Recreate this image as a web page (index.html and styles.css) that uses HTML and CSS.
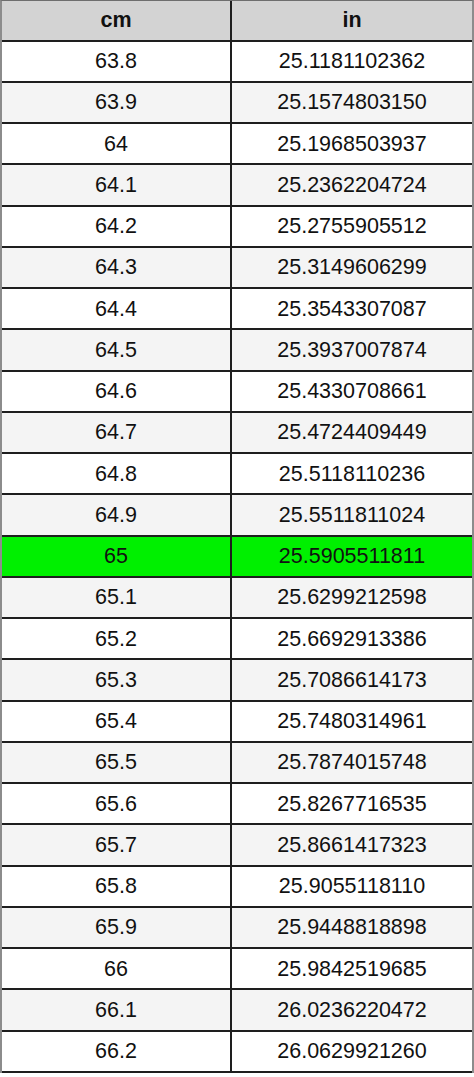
FILE: index.html
```html
<!DOCTYPE html>
<html lang="en">
<head>
<meta charset="utf-8">
<title>cm to in</title>
<link rel="stylesheet" href="styles.css">
</head>
<body>
<table class="conv">
  <thead>
    <tr class="head"><th class="c1">cm</th><th class="c2">in</th></tr>
  </thead>
  <tbody>
    <tr><td class="c1">63.8</td><td class="c2">25.1181102362</td></tr>
    <tr class="alt"><td class="c1">63.9</td><td class="c2">25.1574803150</td></tr>
    <tr><td class="c1">64</td><td class="c2">25.1968503937</td></tr>
    <tr class="alt"><td class="c1">64.1</td><td class="c2">25.2362204724</td></tr>
    <tr><td class="c1">64.2</td><td class="c2">25.2755905512</td></tr>
    <tr class="alt"><td class="c1">64.3</td><td class="c2">25.3149606299</td></tr>
    <tr><td class="c1">64.4</td><td class="c2">25.3543307087</td></tr>
    <tr class="alt"><td class="c1">64.5</td><td class="c2">25.3937007874</td></tr>
    <tr><td class="c1">64.6</td><td class="c2">25.4330708661</td></tr>
    <tr class="alt"><td class="c1">64.7</td><td class="c2">25.4724409449</td></tr>
    <tr><td class="c1">64.8</td><td class="c2">25.5118110236</td></tr>
    <tr class="alt"><td class="c1">64.9</td><td class="c2">25.5511811024</td></tr>
    <tr class="hl"><td class="c1">65</td><td class="c2">25.5905511811</td></tr>
    <tr class="alt"><td class="c1">65.1</td><td class="c2">25.6299212598</td></tr>
    <tr><td class="c1">65.2</td><td class="c2">25.6692913386</td></tr>
    <tr class="alt"><td class="c1">65.3</td><td class="c2">25.7086614173</td></tr>
    <tr><td class="c1">65.4</td><td class="c2">25.7480314961</td></tr>
    <tr class="alt"><td class="c1">65.5</td><td class="c2">25.7874015748</td></tr>
    <tr><td class="c1">65.6</td><td class="c2">25.8267716535</td></tr>
    <tr class="alt"><td class="c1">65.7</td><td class="c2">25.8661417323</td></tr>
    <tr><td class="c1">65.8</td><td class="c2">25.9055118110</td></tr>
    <tr class="alt"><td class="c1">65.9</td><td class="c2">25.9448818898</td></tr>
    <tr><td class="c1">66</td><td class="c2">25.9842519685</td></tr>
    <tr class="alt"><td class="c1">66.1</td><td class="c2">26.0236220472</td></tr>
    <tr><td class="c1">66.2</td><td class="c2">26.0629921260</td></tr>
  </tbody>
</table>
</body>
</html>
```

FILE: styles.css
```css
html, body {
  margin: 0;
  padding: 0;
  background: #ffffff;
}

.conv {
  width: 474px;
  table-layout: fixed;
  border-collapse: separate;
  border-spacing: 0;
  border-left: 2px solid #8c8c8c;
  border-right: 2px solid #8c8c8c;
  border-top: 1px solid #6e6e6e;
  font-family: "Liberation Sans", Arial, sans-serif;
  font-size: 21.5px;
  color: #111111;
}

.conv th,
.conv td {
  padding: 0;
  text-align: center;
  vertical-align: middle;
  border-bottom: 2px solid #1e1e1e;
  box-sizing: border-box;
  line-height: 24px;
}

.conv .c1 {
  width: 230px;
  border-right: 2px solid #1e1e1e;
}

.conv .c2 {
  width: 240px;
}

.head th {
  height: 40.5px;
  background: #d3d3d3;
  font-weight: bold;
  color: #111111;
}

.conv tbody td {
  height: 41.25px;
  background: #ffffff;
}

.conv tbody tr.alt td {
  background: #f4f4f4;
}

.conv tbody tr.hl td {
  background: #00f000;
}
```
